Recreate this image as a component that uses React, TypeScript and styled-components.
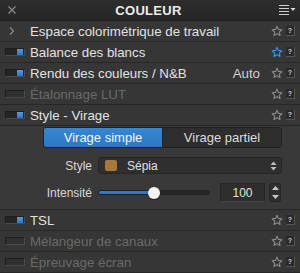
import styled, { createGlobalStyle } from 'styled-components';

const GlobalStyle = createGlobalStyle`
  html, body {
    margin: 0;
    padding: 0;
    background: #333333;
  }
  body {
    font-family: 'Liberation Sans', Arial, sans-serif;
    -webkit-font-smoothing: antialiased;
  }
`;

const Panel = styled.div`
  width: 300px;
  height: 273px;
  overflow: hidden;
  background: #363636;
  color: #e2e2e2;
  font-size: 13px;
`;

const Header = styled.div`
  display: flex;
  align-items: center;
  justify-content: space-between;
  height: 20px;
  padding: 0 3px 0 4px;
  background: linear-gradient(#2e2e2e, #262626);
  border-bottom: 1px solid #1f1f1f;
`;

const HeaderTitle = styled.span`
  font-size: 13px;
  font-weight: 700;
  letter-spacing: 0.3px;
  color: #ececec;
`;

const IconButton = styled.span<{ $width?: number }>`
  display: flex;
  align-items: center;
  justify-content: center;
  width: ${(p) => p.$width ?? 16}px;
  height: 16px;
`;

const Row = styled.div<{ $disabled?: boolean }>`
  display: flex;
  align-items: center;
  height: 20px;
  padding: 0 5px 0 5px;
  border-bottom: 1px solid #272727;
  color: ${(p) => (p.$disabled ? '#6a6a6a' : '#e2e2e2')};
  font-size: 13.3px;
`;

const RowLead = styled.span`
  display: flex;
  align-items: center;
  width: 25px;
  flex-shrink: 0;
`;

const RowTitle = styled.span`
  flex: 1;
  white-space: nowrap;
  overflow: hidden;
`;

const RowValue = styled.span`
  margin-right: 11px;
  color: #cfcfcf;
`;

const Toggle = styled.span<{ $on?: boolean }>`
  display: flex;
  justify-content: flex-end;
  align-items: center;
  box-sizing: border-box;
  width: 20px;
  height: 8px;
  padding: 0 1px;
  border: 1px solid #1d1d1d;
  border-right-color: #4c4c4c;
  border-bottom-color: #4c4c4c;
  background: ${(p) => (p.$on ? '#242424' : '#303030')};
  margin-top: -1px;
`;

const ToggleKnob = styled.span`
  width: 6px;
  height: 6px;
  background: linear-gradient(#4f9fea, #2d76c6);
`;

const Actions = styled.span`
  display: flex;
  align-items: center;
  gap: 3px;
`;

const HelpBox = styled.span`
  display: flex;
  align-items: center;
  justify-content: center;
  width: 8px;
  height: 9px;
  background: #2a2a2a;
  border-right: 1px solid #555;
  border-bottom: 1px solid #555;
  color: #cfcfcf;
  font-size: 7px;
  font-weight: 700;
  line-height: 1;
`;

const SubPanel = styled.div`
  display: flex;
  flex-direction: column;
  height: 84px;
  padding: 1px 18px 0 43px;
  box-sizing: border-box;
  background: #393939;
  border-bottom: 1px solid #272727;
`;

const Segmented = styled.div`
  display: flex;
  height: 21px;
  border: 1px solid #222;
  border-radius: 3px;
  overflow: hidden;
  box-sizing: border-box;
`;

const Segment = styled.span<{ $active?: boolean }>`
  flex: 1;
  display: flex;
  align-items: center;
  justify-content: center;
  font-size: 13px;
  color: ${(p) => (p.$active ? '#f2f6fb' : '#dcdcdc')};
  background: ${(p) => (p.$active ? 'linear-gradient(#3787d2, #2b77c2)' : '#2d2d2d')};
  border-left: ${(p) => (p.$active ? 'none' : '1px solid #222')};
`;

const FieldRow = styled.div<{ $top: number; $height: number }>`
  display: flex;
  align-items: center;
  margin-top: ${(p) => p.$top}px;
  height: ${(p) => p.$height}px;
`;

const FieldLabel = styled.span`
  width: 49px;
  flex-shrink: 0;
  text-align: right;
  padding-right: 6px;
  color: #d8d8d8;
  font-size: 12px;
`;

const Select = styled.div`
  flex: 1;
  display: flex;
  align-items: center;
  height: 17px;
  padding: 0 4px 0 6px;
  border: 1px solid #262626;
  border-radius: 3px;
  background: #2f2f2f;
  box-sizing: border-box;
  font-size: 12px;
`;

const Swatch = styled.span`
  width: 12px;
  height: 11px;
  border-radius: 2px;
  background: #a8773b;
  margin-right: 10px;
`;

const SelectText = styled.span`
  flex: 1;
  color: #e0e0e0;
`;

const Slider = styled.div`
  position: relative;
  width: 112px;
  height: 5px;
  border-radius: 3px;
  background: #272727;
  border: 1px solid #1f1f1f;
  box-sizing: border-box;
`;

const SliderFill = styled.div`
  height: 100%;
  border-radius: 3px;
  background: #2f7ac6;
`;

const SliderThumb = styled.span`
  position: absolute;
  top: 50%;
  width: 12px;
  height: 12px;
  margin: -6px 0 0 -6px;
  border-radius: 50%;
  background: #f4f4f4;
  box-shadow: 0 1px 1px rgba(0, 0, 0, 0.5);
`;

const NumberBox = styled.span`
  display: flex;
  align-items: center;
  justify-content: center;
  width: 45px;
  height: 19px;
  margin-left: 10px;
  box-sizing: border-box;
  background: #2e2e2e;
  border: 1px solid #262626;
  border-bottom-color: #444;
  font-size: 12px;
  color: #e0e0e0;
`;

const Stepper = styled.span`
  display: flex;
  flex-direction: column;
  align-items: center;
  justify-content: space-around;
  width: 12px;
  height: 19px;
  margin-left: 4px;
  box-sizing: border-box;
  background: #2f2f2f;
  border: 1px solid #262626;
  border-radius: 2px;
`;

const Star = ({ color = '#8a8a8a' }: { color?: string }) => (
  <svg width='12' height='12' viewBox='0 0 24 24'>
    <path
      d='M12 2.5l2.9 6.3 6.9.7-5.2 4.6 1.5 6.8L12 17.4l-6.1 3.5 1.5-6.8-5.2-4.6 6.9-.7z'
      fill='none'
      stroke={color}
      strokeWidth='2.2'
      strokeLinejoin='round'
    />
  </svg>
);

const RowActions = ({ starColor }: { starColor?: string }) => (
  <Actions>
    <Star color={starColor} />
    <HelpBox>?</HelpBox>
  </Actions>
);

type RowData = {
  title: string;
  on?: boolean;
  disabled?: boolean;
  value?: string;
  star?: string;
};

const rows: RowData[] = [
  { title: 'Balance des blancs', on: true, star: '#3f93ea' },
  { title: 'Rendu des couleurs / N&B', on: true, value: 'Auto' },
  { title: 'Étalonnage LUT', disabled: true },
];

const bottomRows: RowData[] = [
  { title: 'TSL', on: true },
  { title: 'Mélangeur de canaux', disabled: true },
  { title: 'Épreuvage écran', disabled: true },
];

const ToolRow = ({ row }: { row: RowData }) => (
  <Row $disabled={row.disabled}>
    <RowLead>
      <Toggle $on={row.on}>{row.on && <ToggleKnob />}</Toggle>
    </RowLead>
    <RowTitle>{row.title}</RowTitle>
    {row.value && <RowValue>{row.value}</RowValue>}
    <RowActions starColor={row.star} />
  </Row>
);

const App = () => {
  const intensity = 50;
  return (
    <>
      <GlobalStyle />
      <Panel>
        <Header>
          <IconButton>
            <svg width='10' height='10' viewBox='0 0 10 10'>
              <path d='M1.5 1.5l7 7M8.5 1.5l-7 7' stroke='#8c8c8c' strokeWidth='1.2' />
            </svg>
          </IconButton>
          <HeaderTitle>COULEUR</HeaderTitle>
          <IconButton $width={20}>
            <svg width='18' height='12' viewBox='0 0 18 12'>
              <path d='M1 1.5h10M1 4.5h10M1 7.5h10M1 10.5h10' stroke='#cfcfcf' strokeWidth='1.2' />
              <path d='M12.5 4h5l-2.5 3z' fill='#dcdcdc' />
            </svg>
          </IconButton>
        </Header>

        <Row>
          <RowLead>
            <svg width='8' height='10' viewBox='0 0 8 10' style={{ marginLeft: 3 }}>
              <path d='M2 1.5l3.5 3.5L2 8.5' fill='none' stroke='#8a8a8a' strokeWidth='1.3' />
            </svg>
          </RowLead>
          <RowTitle>Espace colorimétrique de travail</RowTitle>
          <RowActions />
        </Row>

        {rows.map((row) => (
          <ToolRow key={row.title} row={row} />
        ))}

        <ToolRow row={{ title: 'Style - Virage', on: true }} />

        <SubPanel>
          <Segmented>
            <Segment $active>Virage simple</Segment>
            <Segment>Virage partiel</Segment>
          </Segmented>
          <FieldRow $top={9} $height={17}>
            <FieldLabel>Style</FieldLabel>
            <Select>
              <Swatch />
              <SelectText>Sépia</SelectText>
              <svg width='7' height='10' viewBox='0 0 7 10'>
                <path d='M3.5 0.5L6.5 4h-6zM3.5 9.5L6.5 6h-6z' fill='#bdbdbd' />
              </svg>
            </Select>
          </FieldRow>
          <FieldRow $top={9} $height={19}>
            <FieldLabel>Intensité</FieldLabel>
            <Slider>
              <SliderFill style={{ width: `${intensity}%` }} />
              <SliderThumb style={{ left: `${intensity}%` }} />
            </Slider>
            <NumberBox>100</NumberBox>
            <Stepper>
              <svg width='7' height='4' viewBox='0 0 7 4'>
                <path d='M3.5 0L7 4H0z' fill='#c8c8c8' />
              </svg>
              <svg width='7' height='4' viewBox='0 0 7 4'>
                <path d='M0 0h7L3.5 4z' fill='#c8c8c8' />
              </svg>
            </Stepper>
          </FieldRow>
        </SubPanel>

        {bottomRows.map((row) => (
          <ToolRow key={row.title} row={row} />
        ))}
      </Panel>
    </>
  );
};

export default App;
